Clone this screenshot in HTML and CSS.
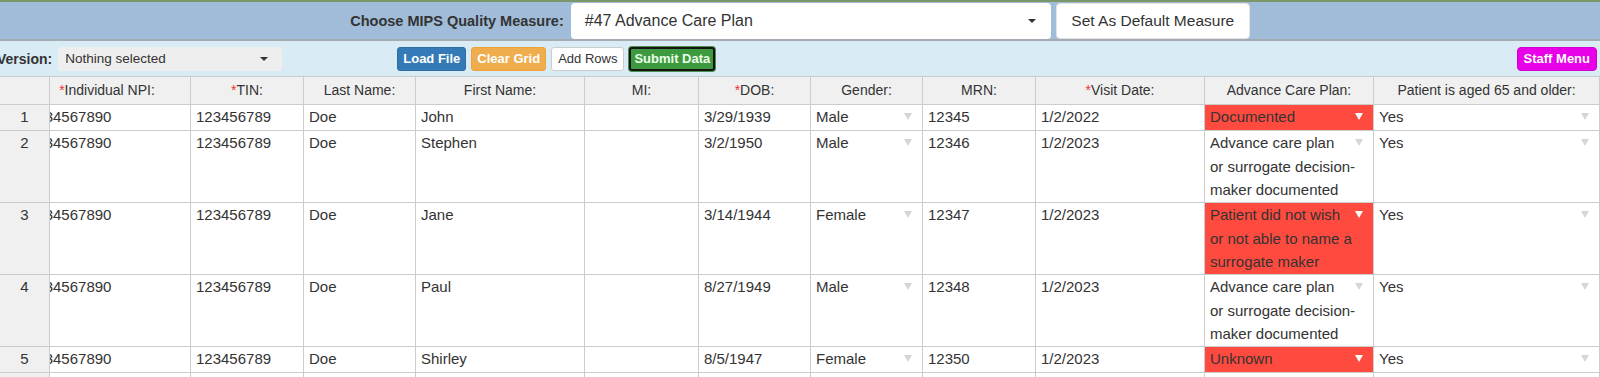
FILE: index.html
```html
<!DOCTYPE html>
<html lang="en">
<head>
  <meta charset="UTF-8">
  <meta name="viewport" content="width=device-width, initial-scale=1.0">
  <title>MIPS Quality Measure - Data Entry</title>
  <link rel="stylesheet" href="styles.css">
</head>
<body>
  <!-- Measure chooser -->
  <header class="measure-bar">
    <label class="measure-label">Choose MIPS Quality Measure:</label>
    <div class="measure-select">
      <span>#47 Advance Care Plan</span>
      <span class="caret"></span>
    </div>
    <button class="default-btn">Set As Default Measure</button>
  </header>

  <!-- Toolbar -->
  <div class="toolbar">
    <span class="version-label">Version:</span>
    <div class="version-select">
      <span>Nothing selected</span>
      <span class="caret"></span>
    </div>
    <div class="actions">
      <button class="btn btn-blue">Load File</button>
      <button class="btn btn-orange">Clear Grid</button>
      <button class="btn btn-white">Add Rows</button>
      <button class="btn btn-green">Submit Data</button>
    </div>
    <button class="btn btn-staff">Staff Menu</button>
  </div>

  <!-- Data grid -->
  <div class="grid">
    <div class="th corner"></div>
    <div class="th npi"><div class="shift"><span class="req">*</span>Individual NPI:</div></div>
    <div class="th"><span class="req">*</span>TIN:</div>
    <div class="th">Last Name:</div>
    <div class="th">First Name:</div>
    <div class="th">MI:</div>
    <div class="th"><span class="req">*</span>DOB:</div>
    <div class="th">Gender:</div>
    <div class="th">MRN:</div>
    <div class="th"><span class="req">*</span>Visit Date:</div>
    <div class="th">Advance Care Plan:</div>
    <div class="th">Patient is aged 65 and older:</div>

    <!-- row 1 -->
    <div class="td rh">1</div>
    <div class="td npi"><div class="shift">1234567890</div></div>
    <div class="td">123456789</div>
    <div class="td">Doe</div>
    <div class="td">John</div>
    <div class="td"></div>
    <div class="td">3/29/1939</div>
    <div class="td dd"><span class="arrow"></span>Male</div>
    <div class="td">12345</div>
    <div class="td">1/2/2022</div>
    <div class="td dd bad"><span class="arrow"></span>Documented</div>
    <div class="td dd"><span class="arrow"></span>Yes</div>

    <!-- row 2 -->
    <div class="td rh">2</div>
    <div class="td npi"><div class="shift">1234567890</div></div>
    <div class="td">123456789</div>
    <div class="td">Doe</div>
    <div class="td">Stephen</div>
    <div class="td"></div>
    <div class="td">3/2/1950</div>
    <div class="td dd"><span class="arrow"></span>Male</div>
    <div class="td">12346</div>
    <div class="td">1/2/2023</div>
    <div class="td dd"><span class="arrow"></span>Advance care plan or surrogate decision-maker documented</div>
    <div class="td dd"><span class="arrow"></span>Yes</div>

    <!-- row 3 -->
    <div class="td rh">3</div>
    <div class="td npi"><div class="shift">1234567890</div></div>
    <div class="td">123456789</div>
    <div class="td">Doe</div>
    <div class="td">Jane</div>
    <div class="td"></div>
    <div class="td">3/14/1944</div>
    <div class="td dd"><span class="arrow"></span>Female</div>
    <div class="td">12347</div>
    <div class="td">1/2/2023</div>
    <div class="td dd bad"><span class="arrow"></span>Patient did not wish or not able to name a surrogate maker</div>
    <div class="td dd"><span class="arrow"></span>Yes</div>

    <!-- row 4 -->
    <div class="td rh">4</div>
    <div class="td npi"><div class="shift">1234567890</div></div>
    <div class="td">123456789</div>
    <div class="td">Doe</div>
    <div class="td">Paul</div>
    <div class="td"></div>
    <div class="td">8/27/1949</div>
    <div class="td dd"><span class="arrow"></span>Male</div>
    <div class="td">12348</div>
    <div class="td">1/2/2023</div>
    <div class="td dd"><span class="arrow"></span>Advance care plan or surrogate decision-maker documented</div>
    <div class="td dd"><span class="arrow"></span>Yes</div>

    <!-- row 5 -->
    <div class="td rh">5</div>
    <div class="td npi"><div class="shift">1234567890</div></div>
    <div class="td">123456789</div>
    <div class="td">Doe</div>
    <div class="td">Shirley</div>
    <div class="td"></div>
    <div class="td">8/5/1947</div>
    <div class="td dd"><span class="arrow"></span>Female</div>
    <div class="td">12350</div>
    <div class="td">1/2/2023</div>
    <div class="td dd bad"><span class="arrow"></span>Unknown</div>
    <div class="td dd"><span class="arrow"></span>Yes</div>

    <!-- row 6 (spare) -->
    <div class="td rh">6</div>
    <div class="td npi"></div>
    <div class="td"></div>
    <div class="td"></div>
    <div class="td"></div>
    <div class="td"></div>
    <div class="td"></div>
    <div class="td"></div>
    <div class="td"></div>
    <div class="td"></div>
    <div class="td"></div>
    <div class="td"></div>
  </div>
</body>
</html>
```

FILE: styles.css
```css
/* Global Styles */
:root {
  --text: #333;
  --grid-line: #ccc;
  --header-bg: #f0f0f0;
  --bar-blue: #a0bcd8;
  --toolbar-blue: #d9ebf5;
  --error-red: #ff4a3f;
}

* {
  margin: 0;
  padding: 0;
  box-sizing: border-box;
}

body {
  width: 1600px;
  overflow: hidden;
  background-color: white;
  color: var(--text);
  font-family: 'Liberation Sans', Arial, sans-serif;
}

button {
  font-family: inherit;
  cursor: pointer;
}

.caret {
  width: 0;
  height: 0;
  border-left: 4px solid transparent;
  border-right: 4px solid transparent;
  border-top: 4px solid #333;
}

/* Measure chooser */
.measure-bar {
  display: flex;
  justify-content: center;
  align-items: center;
  height: 41px;
  background-color: var(--bar-blue);
  border-top: 2px solid #7b9768;
  border-bottom: 2px solid #a4abb2;
}

.measure-label {
  margin-right: 7px;
  font-size: 14.5px;
  font-weight: bold;
  color: var(--text);
}

.measure-select {
  display: flex;
  justify-content: space-between;
  align-items: center;
  width: 480px;
  height: 36px;
  padding: 0 15px 0 14px;
  background-color: white;
  border-radius: 4px;
  font-size: 16px;
}

.default-btn {
  margin-left: 5px;
  width: 194px;
  height: 36px;
  background-color: white;
  border: 1px solid #e2e2e2;
  border-radius: 4px;
  font-size: 15.5px;
  color: var(--text);
}

/* Toolbar */
.toolbar {
  display: flex;
  align-items: center;
  height: 35px;
  background-color: var(--toolbar-blue);
}

.version-label {
  margin-left: -3px;
  font-size: 14px;
  font-weight: bold;
}

.version-select {
  display: flex;
  justify-content: space-between;
  align-items: center;
  margin-left: 6px;
  width: 224px;
  height: 24px;
  padding: 0 14px 0 7px;
  background-color: #eeeeee;
  border-radius: 4px;
  font-size: 13.5px;
}

.actions {
  display: flex;
  gap: 5px;
  margin-left: 115px;
}

.btn {
  height: 24px;
  padding: 0 5px;
  border: 1px solid transparent;
  border-radius: 3px;
  font-size: 13px;
  font-weight: bold;
  color: white;
}

.btn-blue {
  background-color: #337ab7;
  border-color: #2e6da4;
}

.btn-orange {
  background-color: #f0ad4e;
  border-color: #eea236;
}

.btn-white {
  padding: 0 6px;
  background-color: white;
  border-color: #ccc;
  font-weight: normal;
  color: var(--text);
}

.btn-green {
  padding: 0 3px;
  background-color: #3e9a3e;
  border: 2px solid #151515;
  box-shadow: 0 0 0 1px #4d8f4d;
  color: #eaffea;
}

.btn-staff {
  margin-left: auto;
  margin-right: 3px;
  padding: 0 6px;
  background-color: #e800e8;
  border-color: #d000d0;
  border-radius: 4px;
}

/* Data grid */
.grid {
  display: grid;
  grid-template-columns: 50px 141px 113px 112px 169px 114px 112px 112px 113px 169px 169px 226px;
}

.th {
  height: 29px;
  line-height: 27px;
  background-color: var(--header-bg);
  border-top: 1px solid var(--grid-line);
  border-right: 1px solid var(--grid-line);
  border-bottom: 1px solid var(--grid-line);
  text-align: center;
  font-size: 14px;
  white-space: nowrap;
  overflow: hidden;
}

.req {
  color: #ee3333;
}

.td {
  min-height: 26px;
  padding: 0 4px 0 5px;
  line-height: 23.67px;
  border-right: 1px solid var(--grid-line);
  border-bottom: 1px solid var(--grid-line);
  background-color: white;
  font-size: 15px;
  overflow: hidden;
}

.td.rh {
  padding: 0;
  background-color: var(--header-bg);
  text-align: center;
}

/* NPI column is scrolled a little under the row headers */
.npi {
  padding: 0;
  overflow: hidden;
}

.npi .shift {
  width: 168px;
  margin-left: -27px;
  white-space: nowrap;
}

.td.npi .shift {
  padding-left: 5px;
}

/* Dropdown cells */
.arrow {
  display: block;
  float: right;
  width: 0;
  height: 0;
  margin: 8px 6px 0 8px;
  border-left: 4px solid transparent;
  border-right: 4px solid transparent;
  border-top: 7px solid #d6d6d6;
}

.td.bad {
  background-color: var(--error-red);
}

.td.bad .arrow {
  border-top-color: white;
}
```
